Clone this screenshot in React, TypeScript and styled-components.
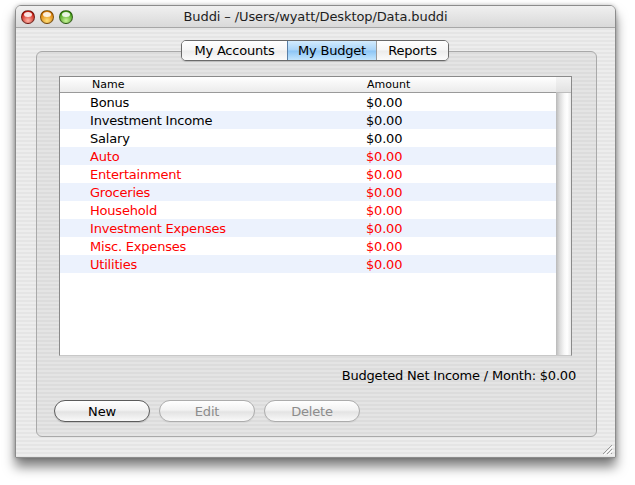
import React from "react";
import styled, { createGlobalStyle } from "styled-components";

const GlobalStyle = createGlobalStyle`
  html, body { margin: 0; padding: 0; background: #ffffff; }
  body { font-family: "DejaVu Sans", "Liberation Sans", sans-serif; }
  * { box-sizing: border-box; }
`;

const Page = styled.div`
  padding: 5px 20px 28px 15px;
`;

const Window = styled.div`
  position: relative;
  width: 601px;
  height: 453px;
  display: flex;
  flex-direction: column;
  border: 1px solid #8c8c8c;
  border-radius: 6px 6px 0 0;
  box-shadow: 0 9px 12px rgba(0, 0, 0, 0.5), 0 0 4px rgba(0, 0, 0, 0.25);
  overflow: hidden;
  background: repeating-linear-gradient(to bottom, #ededed 0 2px, #e5e5e5 2px 4px);
`;

const TitleBar = styled.div`
  height: 22px;
  flex: none;
  display: grid;
  grid-template-columns: 1fr auto 1fr;
  align-items: center;
  padding: 0 5px;
  background: linear-gradient(to bottom, #f0f0f0, #d9d9d9);
  border-bottom: 1px solid #a7a7a7;
`;

const Lights = styled.div`
  display: flex;
  gap: 5px;
`;

const Light = styled.span<{ $c: string; $d: string }>`
  position: relative;
  width: 14px;
  height: 14px;
  border-radius: 50%;
  border: 1px solid rgba(0, 0, 0, 0.45);
  background: radial-gradient(circle at 50% 80%, ${(p) => p.$c} 0%, ${(p) => p.$d} 75%);
  &::after {
    content: "";
    position: absolute;
    left: 2px;
    top: 1px;
    width: 8px;
    height: 5px;
    border-radius: 50%;
    background: rgba(255, 255, 255, 0.85);
  }
`;

const Title = styled.div`
  font-size: 13px;
  color: #1e1e1e;
  white-space: nowrap;
  letter-spacing: -0.1px;
`;

const Body = styled.div`
  flex: 1;
  display: flex;
  flex-direction: column;
  padding: 12px 18px 20px 20px;
`;

const TabRow = styled.div`
  display: flex;
  justify-content: center;
  margin-bottom: -10px;
  padding-right: 3px;
  position: relative;
  z-index: 1;
`;

const Segmented = styled.div`
  display: inline-flex;
  height: 21px;
  border: 1px solid #6a6a6a;
  border-radius: 5px;
  overflow: hidden;
  box-shadow: 0 1px 1px rgba(0, 0, 0, 0.15);
`;

const Segment = styled.div<{ $w: number; $active?: boolean }>`
  width: ${(p) => p.$w}px;
  display: flex;
  align-items: center;
  justify-content: center;
  font-size: 13px;
  color: #000;
  letter-spacing: -0.2px;
  border-left: 1px solid ${(p) => (p.$active ? "#5a7fa6" : "#9a9a9a")};
  &:first-child { border-left: none; }
  background: ${(p) =>
    p.$active
      ? "linear-gradient(to bottom, #d3ebfd 0%, #a9d4f8 48%, #8cc5f5 52%, #c4e6fe 100%)"
      : "linear-gradient(to bottom, #ffffff 0%, #f6f6f6 48%, #ececec 52%, #fbfbfb 100%)"};
`;

const GroupBox = styled.div`
  flex: 1;
  display: flex;
  flex-direction: column;
  border: 1px solid #a9a9a9;
  border-radius: 6px;
  background: rgba(0, 0, 0, 0.035);
  padding: 24px 20px 14px 17px;
`;

const Table = styled.div`
  height: 280px;
  margin: 0 4px 0 5px;
  display: grid;
  grid-template-columns: 1fr 15px;
  grid-template-rows: 16px 1fr;
  border: 1px solid #8a8a8a;
  border-bottom-color: #c8c8c8;
  background: #fff;
`;

const Header = styled.div`
  display: grid;
  grid-template-columns: 306px 1fr;
  align-items: center;
  font-size: 11px;
  color: #000;
  background: linear-gradient(to bottom, #ffffff, #ebebeb);
  border-bottom: 1px solid #9a9a9a;
`;

const HeadCell = styled.div<{ $pad: number }>`
  padding-left: ${(p) => p.$pad}px;
`;

const Corner = styled.div`
  background: linear-gradient(to bottom, #f4f4f4, #e2e2e2);
  border-bottom: 1px solid #bdbdbd;
`;

const Rows = styled.div`
  display: flex;
  flex-direction: column;
`;

const Row = styled.div<{ $alt: boolean; $neg: boolean }>`
  height: 18px;
  display: grid;
  grid-template-columns: 306px 1fr;
  align-items: center;
  font-size: 13px;
  letter-spacing: -0.2px;
  color: ${(p) => (p.$neg ? "#ff0000" : "#000")};
  background: ${(p) => (p.$alt ? "#ecf2fd" : "#ffffff")};
`;

const Cell = styled.div<{ $pad: number }>`
  padding-left: ${(p) => p.$pad}px;
  white-space: nowrap;
`;

const ScrollTrack = styled.div`
  background: linear-gradient(to right, #b9b9b9 0%, #dcdcdc 25%, #f7f7f7 55%, #ffffff 75%, #e9e9e9 100%);
`;

const Summary = styled.div`
  margin-top: 12px;
  text-align: right;
  font-size: 13px;
  letter-spacing: -0.2px;
  color: #000;
  line-height: 16px;
`;

const ButtonRow = styled.div`
  margin-top: auto;
  display: flex;
  gap: 9px;
`;

const PillButton = styled.button<{ $disabled?: boolean }>`
  width: 96px;
  height: 22px;
  border-radius: 11px;
  font-family: inherit;
  font-size: 13px;
  letter-spacing: -0.2px;
  padding: 0;
  color: ${(p) => (p.$disabled ? "#8c8c8c" : "#000")};
  border: 1px solid ${(p) => (p.$disabled ? "#acacac" : "#5c5c5c")};
  background: linear-gradient(to bottom, #ffffff 0%, #f2f2f2 45%, #e3e3e3 55%, #f9f9f9 100%);
  box-shadow: 0 1px 1px rgba(0, 0, 0, ${(p) => (p.$disabled ? 0.05 : 0.15)});
`;

const Grip = styled.svg`
  position: absolute;
  right: 2px;
  bottom: 2px;
`;

type Item = { name: string; neg: boolean };

const items: Item[] = [
  { name: "Bonus", neg: false },
  { name: "Investment Income", neg: false },
  { name: "Salary", neg: false },
  { name: "Auto", neg: true },
  { name: "Entertainment", neg: true },
  { name: "Groceries", neg: true },
  { name: "Household", neg: true },
  { name: "Investment Expenses", neg: true },
  { name: "Misc. Expenses", neg: true },
  { name: "Utilities", neg: true },
];

export default function App() {
  return (
    <>
      <GlobalStyle />
      <Page>
        <Window>
          <TitleBar>
            <Lights>
              <Light $c="#ffb3a6" $d="#c8180e" />
              <Light $c="#ffe07a" $d="#d97a00" />
              <Light $c="#c9f59a" $d="#3f9a12" />
            </Lights>
            <Title>Buddi – /Users/wyatt/Desktop/Data.buddi</Title>
            <div />
          </TitleBar>
          <Body>
            <TabRow>
              <Segmented>
                <Segment $w={105}>My Accounts</Segment>
                <Segment $w={89} $active>
                  My Budget
                </Segment>
                <Segment $w={72}>Reports</Segment>
              </Segmented>
            </TabRow>
            <GroupBox>
              <Table>
                <Header>
                  <HeadCell $pad={32}>Name</HeadCell>
                  <HeadCell $pad={1}>Amount</HeadCell>
                </Header>
                <Corner />
                <Rows>
                  {items.map((it, i) => (
                    <Row key={it.name} $alt={i % 2 === 1} $neg={it.neg}>
                      <Cell $pad={30}>{it.name}</Cell>
                      <Cell $pad={0}>$0.00</Cell>
                    </Row>
                  ))}
                </Rows>
                <ScrollTrack />
              </Table>
              <Summary>Budgeted Net Income / Month: $0.00</Summary>
              <ButtonRow>
                <PillButton>New</PillButton>
                <PillButton $disabled>Edit</PillButton>
                <PillButton $disabled>Delete</PillButton>
              </ButtonRow>
            </GroupBox>
          </Body>
          <Grip width="12" height="12" viewBox="0 0 12 12">
            <g stroke="#9a9a9a" strokeWidth="1">
              <line x1="11" y1="2" x2="2" y2="11" />
              <line x1="11" y1="6" x2="6" y2="11" />
              <line x1="11" y1="10" x2="10" y2="11" />
            </g>
            <g stroke="#ffffff" strokeWidth="1">
              <line x1="12" y1="3" x2="3" y2="12" />
              <line x1="12" y1="7" x2="7" y2="12" />
            </g>
          </Grip>
        </Window>
      </Page>
    </>
  );
}
